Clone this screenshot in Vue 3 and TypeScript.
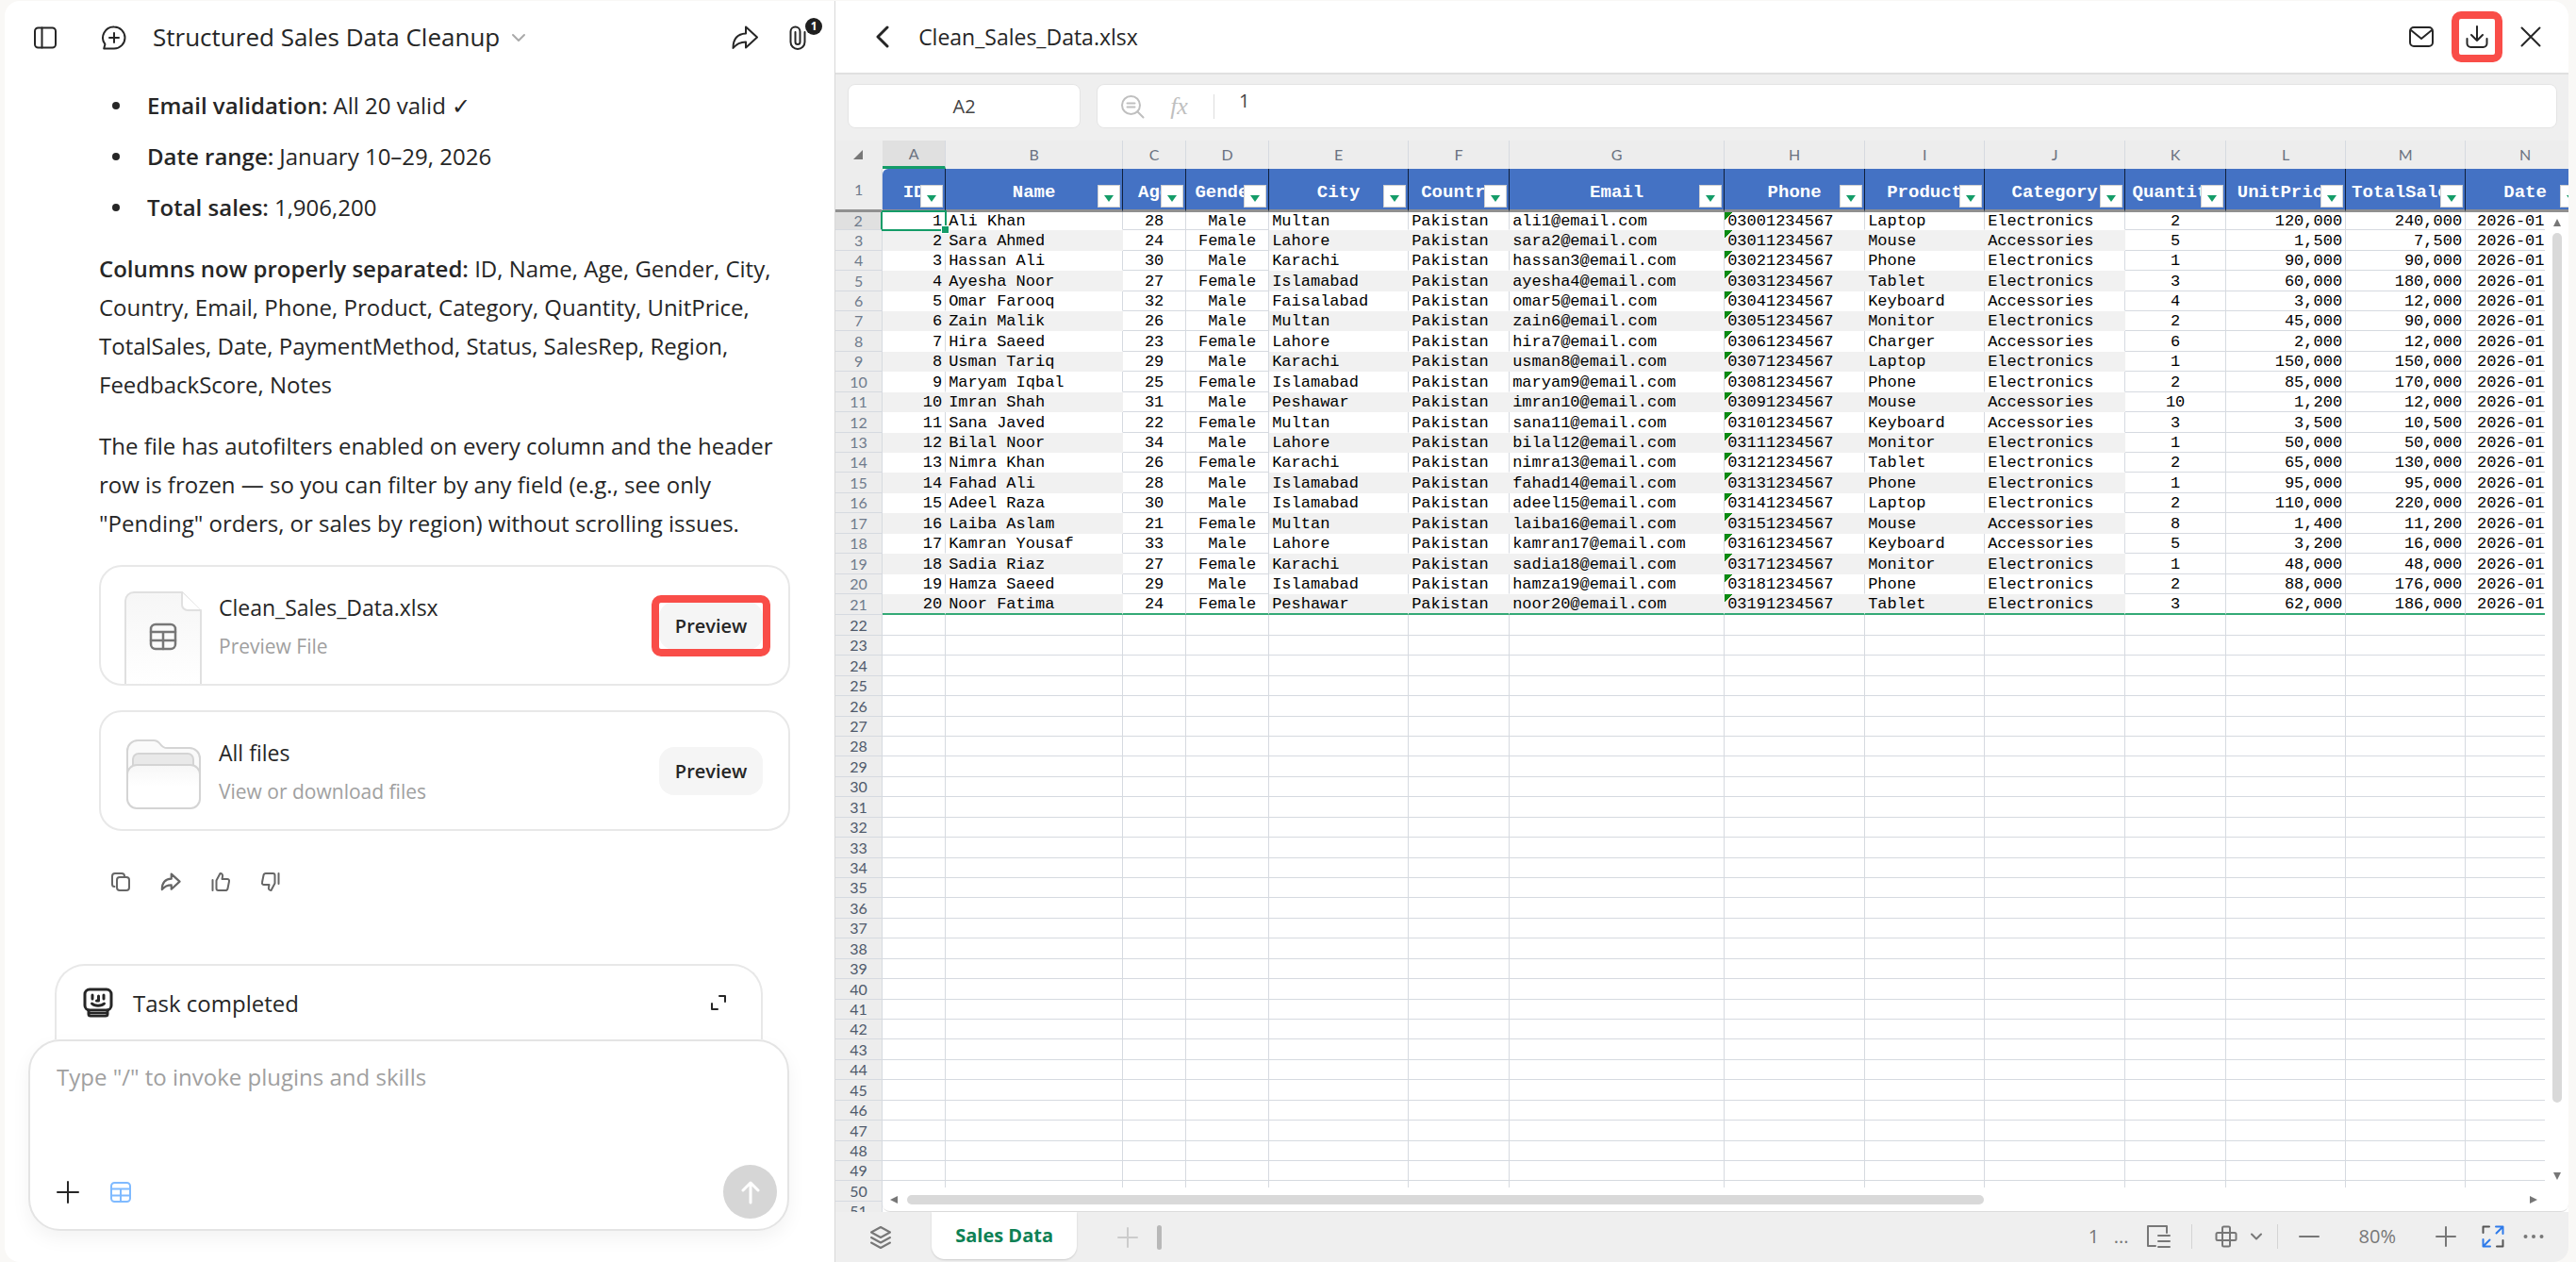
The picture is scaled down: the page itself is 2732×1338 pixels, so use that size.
<script setup lang="ts">
import { computed, ref } from 'vue'

type Align = 'left' | 'center' | 'right'

interface Column {
  letter: string
  title: string
  width: number
  align: Align
  filled: boolean
}

const columns: Column[] = [
  { letter: 'A', title: 'ID', width: 67, align: 'right', filled: true },
  { letter: 'B', title: 'Name', width: 188, align: 'left', filled: true },
  { letter: 'C', title: 'Age', width: 67, align: 'center', filled: false },
  { letter: 'D', title: 'Gender', width: 88, align: 'center', filled: false },
  { letter: 'E', title: 'City', width: 148, align: 'left', filled: true },
  { letter: 'F', title: 'Country', width: 107, align: 'left', filled: true },
  { letter: 'G', title: 'Email', width: 228, align: 'left', filled: true },
  { letter: 'H', title: 'Phone', width: 149, align: 'left', filled: true },
  { letter: 'I', title: 'Product', width: 127, align: 'left', filled: true },
  { letter: 'J', title: 'Category', width: 149, align: 'left', filled: true },
  { letter: 'K', title: 'Quantity', width: 107, align: 'center', filled: false },
  { letter: 'L', title: 'UnitPrice', width: 127, align: 'right', filled: false },
  { letter: 'M', title: 'TotalSales', width: 127, align: 'right', filled: false },
  { letter: 'N', title: 'Date', width: 127, align: 'center', filled: false },
]

const rowHeaderWidth = 50
const tableWidth = computed(() => columns.reduce((sum, c) => sum + c.width, rowHeaderWidth))

// name, age, gender, city, product, category, quantity, unit price
type Sale = [string, number, string, string, string, string, number, number]

const sales: Sale[] = [
  ['Ali Khan', 28, 'Male', 'Multan', 'Laptop', 'Electronics', 2, 120000],
  ['Sara Ahmed', 24, 'Female', 'Lahore', 'Mouse', 'Accessories', 5, 1500],
  ['Hassan Ali', 30, 'Male', 'Karachi', 'Phone', 'Electronics', 1, 90000],
  ['Ayesha Noor', 27, 'Female', 'Islamabad', 'Tablet', 'Electronics', 3, 60000],
  ['Omar Farooq', 32, 'Male', 'Faisalabad', 'Keyboard', 'Accessories', 4, 3000],
  ['Zain Malik', 26, 'Male', 'Multan', 'Monitor', 'Electronics', 2, 45000],
  ['Hira Saeed', 23, 'Female', 'Lahore', 'Charger', 'Accessories', 6, 2000],
  ['Usman Tariq', 29, 'Male', 'Karachi', 'Laptop', 'Electronics', 1, 150000],
  ['Maryam Iqbal', 25, 'Female', 'Islamabad', 'Phone', 'Electronics', 2, 85000],
  ['Imran Shah', 31, 'Male', 'Peshawar', 'Mouse', 'Accessories', 10, 1200],
  ['Sana Javed', 22, 'Female', 'Multan', 'Keyboard', 'Accessories', 3, 3500],
  ['Bilal Noor', 34, 'Male', 'Lahore', 'Monitor', 'Electronics', 1, 50000],
  ['Nimra Khan', 26, 'Female', 'Karachi', 'Tablet', 'Electronics', 2, 65000],
  ['Fahad Ali', 28, 'Male', 'Islamabad', 'Phone', 'Electronics', 1, 95000],
  ['Adeel Raza', 30, 'Male', 'Islamabad', 'Laptop', 'Electronics', 2, 110000],
  ['Laiba Aslam', 21, 'Female', 'Multan', 'Mouse', 'Accessories', 8, 1400],
  ['Kamran Yousaf', 33, 'Male', 'Lahore', 'Keyboard', 'Accessories', 5, 3200],
  ['Sadia Riaz', 27, 'Female', 'Karachi', 'Monitor', 'Electronics', 1, 48000],
  ['Hamza Saeed', 29, 'Male', 'Islamabad', 'Phone', 'Electronics', 2, 88000],
  ['Noor Fatima', 24, 'Female', 'Peshawar', 'Tablet', 'Electronics', 3, 62000],
]

const money = (n: number) => n.toLocaleString('en-US')

const sheetRows = computed(() =>
  Array.from({ length: 50 }, (_, i) => {
    const sale = sales[i]
    if (!sale) return { number: i + 2, cells: null }
    const [name, age, gender, city, product, category, quantity, price] = sale
    const id = i + 1
    return {
      number: i + 2,
      cells: [
        String(id), name, String(age), gender, city, 'Pakistan',
        `${name.split(' ')[0].toLowerCase()}${id}@email.com`,
        `03${String(i).padStart(2, '0')}1234567`,
        product, category, String(quantity), money(price), money(price * quantity),
        `2026-01-${id + 9}`,
      ],
    }
  }),
)

const files = [
  { kind: 'workbook', title: 'Clean_Sales_Data.xlsx', note: 'Preview File', marked: true },
  { kind: 'folder', title: 'All files', note: 'View or download files', marked: false },
]

const draft = ref('')
const cellName = ref('A2')
const formula = ref('1')
</script>

<template>
  <div class="app">
    <section class="chat">
      <header class="chat-head">
        <button class="icon" aria-label="Toggle sidebar">
          <svg width="26" height="26" viewBox="0 0 26 26"><rect x="2" y="2.500" width="22" height="21" rx="3.500" /><path d="M9.500 2.500v21" /></svg>
        </button>
        <button class="icon new-chat" aria-label="New chat">
          <svg width="28" height="28" viewBox="0 0 28 28"><path d="M14 2.500a11.500 11.500 0 1 1 0 23H3.200l1.200-4.600A11.500 11.500 0 0 1 14 2.500zM14 9v10M9 14h10" /></svg>
        </button>
        <h1>Structured Sales Data Cleanup</h1>
        <svg class="caret" width="16" height="16" viewBox="0 0 16 16"><path d="M2 5l6 6 6-6" /></svg>
        <div class="chat-tools">
          <button class="icon" aria-label="Share">
            <svg width="30" height="28" viewBox="0 0 30 28"><path d="M16 2.500L28 13.500 16 24.500v-6c-6 0-9.500 1.500-13.500 6.500 0-8 3.500-15 13.500-15.500z" /></svg>
          </button>
          <button class="icon attach" aria-label="Attachments">
            <svg width="22" height="28" viewBox="0 0 22 28"><path d="M18.500 8v10.500a7.500 7.500 0 0 1-15 0V7.500a5 5 0 0 1 10 0v11a2.500 2.500 0 0 1-5 0V8" /></svg>
            <span class="badge">1</span>
          </button>
        </div>
      </header>

      <div class="message">
        <ul>
          <li><strong>Email validation:</strong> All 20 valid ✓</li>
          <li><strong>Date range:</strong> January 10–29, 2026</li>
          <li><strong>Total sales:</strong> 1,906,200</li>
        </ul>
        <p>
          <strong>Columns now properly separated:</strong> ID, Name, Age, Gender, City, Country, Email, Phone,
          Product, Category, Quantity, UnitPrice, TotalSales, Date, PaymentMethod, Status, SalesRep, Region,
          FeedbackScore, Notes
        </p>
        <p>
          The file has autofilters enabled on every column and the header row is frozen — so you can filter by any
          field (e.g., see only "Pending" orders, or sales by region) without scrolling issues.
        </p>

        <div class="files">
          <article v-for="file in files" :key="file.kind" class="file">
            <svg v-if="file.kind === 'workbook'" class="thumb" width="82" height="98" viewBox="0 0 82 98">
              <defs><linearGradient id="paper" x1="0" y1="0" x2="0" y2="1"><stop offset="0" stop-color="#f6f6f6" /><stop offset="1" stop-color="#fff" /></linearGradient></defs>
              <path d="M1 99V10a9 9 0 0 1 9-9h51l20 20v78" fill="url(#paper)" stroke="#e0e0e0" stroke-width="2" />
              <path d="M61 1v13a6 6 0 0 0 6 6h14" fill="#fff" stroke="#e0e0e0" stroke-width="2" />
              <g stroke="#777" stroke-width="2.500"><rect x="28" y="35" width="26" height="26" rx="5" /><path d="M28 43h26M28 52h26M41 43v18" /></g>
            </svg>
            <svg v-else class="thumb" width="82" height="98" viewBox="0 0 82 98">
              <defs><linearGradient id="flap" x1="0" y1="0" x2="0" y2="1"><stop offset="0" stop-color="#f7f7f7" /><stop offset=".5" stop-color="#fff" /></linearGradient></defs>
              <g stroke="#d4d4d4" stroke-width="2">
                <path d="M3 40V15a11 11 0 0 1 11-11h17c8 0 6 8 14 8h24a11 11 0 0 1 11 11v17z" fill="#fafafa" />
                <path d="M9 34V24a6 6 0 0 1 6-6h52a6 6 0 0 1 6 6v10z" fill="#e9e9e9" />
                <rect x="3" y="30" width="77" height="46" rx="10" fill="url(#flap)" />
              </g>
            </svg>
            <div class="file-text">
              <h2>{{ file.title }}</h2>
              <span>{{ file.note }}</span>
            </div>
            <button class="preview">Preview<i v-if="file.marked" class="mark"></i></button>
          </article>
        </div>

        <div class="actions">
          <button class="icon" aria-label="Copy">
            <svg width="22" height="22" viewBox="0 0 22 22"><rect x="7" y="6" width="13" height="14" rx="3" /><path d="M4.500 16A2.500 2.500 0 0 1 2 13.500V5a3 3 0 0 1 3-3h7a3 3 0 0 1 3 3" /></svg>
          </button>
          <button class="icon" aria-label="Share answer">
            <svg class="bold" width="22" height="22" viewBox="0 0 30 28"><path d="M16 2.500L28 13.500 16 24.500v-6c-6 0-9.500 1.500-13.500 6.500 0-8 3.500-15 13.500-15.500z" /></svg>
          </button>
          <button class="icon" aria-label="Good answer">
            <svg width="22" height="22" viewBox="0 0 22 22"><path d="M2.500 9v11M6.500 9.500L10.500 2c2 0 3 1.500 2.500 3.500L12.500 8H18a2 2 0 0 1 2 2.500l-1.500 7.500a2.500 2.500 0 0 1-2.500 2H8.500a2 2 0 0 1-2-2z" /></svg>
          </button>
          <button class="icon" aria-label="Bad answer">
            <svg width="22" height="22" viewBox="0 0 22 22"><path d="M19.500 2v11M15.500 12.500L11.500 20c-2 0-3-1.500-2.500-3.500L9.500 14H4a2 2 0 0 1-2-2.500L3.500 4A2.500 2.500 0 0 1 6 2h7.500a2 2 0 0 1 2 2z" /></svg>
          </button>
        </div>
      </div>

      <div class="dock">
        <div class="task">
          <svg class="bold" width="34" height="34" viewBox="0 0 34 34">
            <rect x="3" y="3" width="28" height="22" rx="5" /><path d="M7 25v4a2 2 0 0 0 2 2h16a2 2 0 0 0 2-2v-4" />
            <path d="M8 28h18" stroke-width="2" /><path d="M11 9v4M23 9v4M17.500 10v5h-2M10.500 18c3 3 10 3 13 0" />
          </svg>
          <span>Task completed</span>
          <button class="icon" aria-label="Expand task">
            <svg width="18" height="18" viewBox="0 0 18 18"><path d="M10 2h6v6M8 16H2v-6" /></svg>
          </button>
        </div>
        <form class="composer" @submit.prevent>
          <textarea v-model="draft" rows="2" aria-label="Message" placeholder="Type &quot;/&quot; to invoke plugins and skills"></textarea>
          <div class="composer-tools">
            <button type="button" class="icon" aria-label="Add">
              <svg width="24" height="24" viewBox="0 0 24 24"><path d="M12 1v22M1 12h22" /></svg>
            </button>
            <button type="button" class="icon sheets" aria-label="Sheets">
              <svg width="24" height="24" viewBox="0 0 24 24"><rect x="2" y="2" width="20" height="20" rx="3.500" /><path d="M2 8.500h20M2 15.500h20M12 8.500V22" /></svg>
            </button>
            <button class="send" aria-label="Send">
              <svg class="bold" width="26" height="26" viewBox="0 0 26 26"><path d="M13 24V3M5 11l8-8 8 8" /></svg>
            </button>
          </div>
        </form>
      </div>
    </section>

    <section class="sheet">
      <header class="sheet-head">
        <button class="icon back" aria-label="Back">
          <svg class="bold" width="16" height="24" viewBox="0 0 16 24"><path d="M13 2L3 12l10 10" /></svg>
        </button>
        <h1>Clean_Sales_Data.xlsx</h1>
        <div class="sheet-tools">
          <button class="icon" aria-label="Mail">
            <svg width="28" height="24" viewBox="0 0 28 24"><rect x="2" y="2" width="24" height="20" rx="4" /><path d="M3 5l11 9 11-9" /></svg>
          </button>
          <button class="icon download" aria-label="Download">
            <svg width="26" height="26" viewBox="0 0 26 26"><path d="M13 2v15M7 11l6 6 6-6M2.500 15v5a4 4 0 0 0 4 4h13a4 4 0 0 0 4-4v-5" /></svg>
          </button>
          <button class="icon" aria-label="Close">
            <svg width="24" height="24" viewBox="0 0 24 24"><path d="M2.500 2.500l19 19M21.500 2.500l-19 19" /></svg>
          </button>
        </div>
      </header>

      <div class="formula-bar">
        <input v-model="cellName" class="cell-name" aria-label="Cell" />
        <div class="formula">
          <svg width="26" height="26" viewBox="0 0 26 26"><circle cx="11.500" cy="11.500" r="9.500" /><path d="M18.500 18.500l6 6M7.500 9.500h8M7.500 13.500h8" /></svg>
          <em>fx</em>
          <input v-model="formula" aria-label="Formula" />
        </div>
      </div>

      <div class="viewport">
        <table :style="{ width: tableWidth + 'px' }">
          <colgroup>
            <col :style="{ width: rowHeaderWidth + 'px' }" />
            <col v-for="c in columns" :key="c.letter" :style="{ width: c.width + 'px' }" />
          </colgroup>
          <thead>
            <tr class="letters">
              <th class="corner"><svg width="10" height="10" viewBox="0 0 10 10"><path d="M10 0v10H0z" /></svg></th>
              <th v-for="c in columns" :key="c.letter" scope="col" :class="{ current: c.letter === 'A' }">{{ c.letter }}</th>
            </tr>
            <tr class="titles">
              <th class="row-number">1</th>
              <th v-for="c in columns" :key="c.letter" class="title">
                <span>{{ c.title }}</span>
                <button class="filter" :aria-label="'Filter ' + c.title"></button>
              </th>
            </tr>
          </thead>
          <tbody>
            <tr v-for="row in sheetRows" :key="row.number" :class="{ data: row.cells, striped: row.cells && row.number % 2 }">
              <th class="row-number" scope="row">{{ row.number }}</th>
              <td v-for="(c, i) in columns" :key="c.letter" :class="[c.align, { filled: c.filled, flagged: row.cells && c.letter === 'H', selected: row.number === 2 && i === 0 }]">{{ row.cells ? row.cells[i] : '' }}</td>
            </tr>
          </tbody>
        </table>
        <div class="bar vertical"><i class="arrow up"></i><i class="grip"></i><i class="rest"></i><i class="arrow down"></i></div>
        <div class="bar horizontal"><i class="arrow prev"></i><i class="grip"></i><i class="rest"></i><i class="arrow next"></i></div>
      </div>

      <footer class="status">
        <button class="icon layers" aria-label="All sheets">
          <svg width="24" height="26" viewBox="0 0 24 26"><path d="M12 2l10 5.500L12 13 2 7.500zM2 13l10 5.500L22 13M2 18.500L12 24l10-5.500" /></svg>
        </button>
        <button class="tab">Sales Data</button>
        <button class="icon add-sheet" aria-label="Add sheet">
          <svg width="22" height="22" viewBox="0 0 22 22"><path d="M11 1v20M1 11h20" /></svg>
        </button>
        <i class="splitter"></i>
        <div class="status-tools">
          <span class="count">1 &nbsp;&nbsp;...</span>
          <button class="icon" aria-label="Outline">
            <svg width="26" height="26" viewBox="0 0 26 26"><path d="M22 9V2H2v21h8M13 12h12M13 18h12M13 24h12" /></svg>
          </button>
          <i class="rule"></i>
          <button class="icon cross" aria-label="Crosshair">
            <svg width="24" height="24" viewBox="0 0 24 24"><rect x="8" y="1.500" width="8" height="21" rx="1.500" /><rect x="1.500" y="8" width="21" height="8" rx="1.500" /></svg>
            <svg width="12" height="12" viewBox="0 0 12 12"><path d="M1 3.500l5 5 5-5" /></svg>
          </button>
          <i class="rule"></i>
          <button class="icon" aria-label="Zoom out">
            <svg width="22" height="22" viewBox="0 0 22 22"><path d="M1 11h20" /></svg>
          </button>
          <span class="zoom">80%</span>
          <button class="icon" aria-label="Zoom in">
            <svg width="22" height="22" viewBox="0 0 22 22"><path d="M11 1v20M1 11h20" /></svg>
          </button>
          <button class="icon full" aria-label="Full screen">
            <svg width="24" height="24" viewBox="0 0 24 24"><path d="M1.500 8V1.500H8M22.500 16v6.500H16" stroke="#555" /><path d="M15 1.500h7.500V9M22 2l-6.500 6.500M9 22.500H1.500V15M2 22l6.500-6.500" stroke="#2f7bea" /></svg>
          </button>
          <button class="icon more" aria-label="More">
            <svg width="22" height="22" viewBox="0 0 22 22"><circle cx="2.500" cy="11" r="2" /><circle cx="11" cy="11" r="2" /><circle cx="19.500" cy="11" r="2" /></svg>
          </button>
        </div>
      </footer>
    </section>
  </div>
</template>

<style>
body {
  margin: 0;
  background: #f9f8f6;
}
</style>

<style scoped>
.app {
  display: flex;
  box-sizing: border-box;
  height: 100vh;
  padding: 1px 8px 0 5px;
  color: #262626;
  font: 24px/41px "Open Sans", "Noto Sans", sans-serif;
}
h1, h2, p, ul {
  margin: 0;
  padding: 0;
  font-weight: 400;
}
button, input, textarea {
  box-sizing: border-box;
  margin: 0;
  padding: 0;
  border: 0;
  background: none;
  color: inherit;
  font: inherit;
  outline: 0;
}
svg {
  display: block;
  flex: none;
  fill: none;
  stroke: currentColor;
  stroke-width: 2;
  stroke-linecap: round;
  stroke-linejoin: round;
}
.bold { stroke-width: 3; }
.icon {
  display: flex;
  flex: none;
  align-items: center;
}

.chat {
  display: flex;
  flex: none;
  flex-direction: column;
  width: 32.37%;
  background: #fff;
  border-radius: 16px 0 0 16px;
}
.chat-head {
  display: flex;
  flex: none;
  align-items: center;
  height: 77px;
  padding: 0 28px 0 30px;
}
.new-chat { margin-left: 46px; }
h1 { white-space: nowrap; }
.chat-head h1 {
  margin-left: 27px;
  font-size: 26px;
}
.caret {
  margin-left: 12px;
  color: #aaa;
}
.chat-tools {
  display: flex;
  gap: 30px;
  margin-left: auto;
}
.attach { position: relative; }
.badge {
  position: absolute;
  top: -7px;
  right: -15px;
  width: 18px;
  height: 18px;
  border-radius: 9px;
  background: #1f1f1f;
  color: #fff;
  font: 700 12px/18px "Open Sans", sans-serif;
  text-align: center;
}
.message {
  display: flex;
  flex-direction: column;
  gap: 24px;
  padding: 13px 47px 0 100px;
}
ul {
  display: flex;
  flex-direction: column;
  gap: 13px;
  list-style: none;
}
li {
  display: flex;
  align-items: center;
  gap: 6px;
  padding-left: 14px;
}
li::before {
  content: "";
  width: 8px;
  height: 8px;
  margin-right: 23px;
  border-radius: 50%;
  background: #262626;
}
strong { font-weight: 600; }
.files {
  display: flex;
  flex-direction: column;
  gap: 26px;
}
.file {
  display: flex;
  align-items: center;
  box-sizing: border-box;
  height: 128px;
  padding: 0 27px 0 25px;
  border: 2px solid #e8e8e8;
  border-radius: 24px;
}
.thumb {
  align-self: flex-end;
}
.file-text {
  display: flex;
  flex-direction: column;
  margin: 4px auto 0 18px;
}
.file-text h2, .sheet-head h1 { font-size: 23px; }
.file-text span {
  color: #a0a0a0;
  font-size: 21px;
}
.preview {
  position: relative;
  width: 110px;
  height: 51px;
  border-radius: 16px;
  background: #f5f5f5;
  font-size: 20px;
  font-weight: 600;
}
.mark {
  position: absolute;
  inset: -7px -8px;
  border: 8px solid #f94d48;
  border-radius: 10px;
}
.actions {
  display: flex;
  gap: 31px;
  margin-top: 19px;
  padding-left: 12px;
  color: #666;
}
.dock {
  margin: auto 48px 33px 25px;
}
.task {
  display: flex;
  align-items: center;
  gap: 20px;
  box-sizing: border-box;
  height: 80px;
  margin: 0 28px;
  padding: 0 36px 0 27px;
  border: 2px solid #e8e8e8;
  border-bottom: 0;
  border-radius: 32px 32px 0 0;
}
.task .icon { margin-left: auto; }
.composer {
  box-sizing: border-box;
  height: 203px;
  padding: 17px 11px 11px 28px;
  display: flex;
  flex-direction: column;
  justify-content: space-between;
  border: 2px solid #e4e4e4;
  border-radius: 34px;
  background: #fff;
  box-shadow: 0 8px 20px rgba(0, 0, 0, 0.05);
}
textarea {
  width: 100%;
  resize: none;
}
textarea::placeholder { color: #a0a0a0; opacity: 1; }
.composer-tools {
  display: flex;
  align-items: center;
}
.sheets {
  margin-left: 32px;
  color: #7fbaff;
}
.send {
  display: flex;
  align-items: center;
  justify-content: center;
  width: 57px;
  height: 57px;
  margin-left: auto;
  border-radius: 50%;
  background: #d6d6d6;
  color: #fff;
}

.sheet {
  display: flex;
  flex: 1;
  flex-direction: column;
  min-width: 0;
  overflow: hidden;
  border-left: 1px solid #d8d8d8;
  border-radius: 0 16px 16px 0;
  background: #efefef;
}
.sheet-head {
  display: flex;
  align-items: center;
  box-sizing: border-box;
  height: 78px;
  padding: 0 28px 0 42px;
  border-bottom: 2px solid #e0e0e0;
  background: #fff;
}
.sheet-head h1 { margin-left: 30px; }
.sheet-tools {
  display: flex;
  align-items: center;
  gap: 18px;
  margin-left: auto;
}
.download {
  box-sizing: border-box;
  justify-content: center;
  width: 54px;
  height: 54px;
  border: 8px solid #f94d48;
  border-radius: 10px;
}
.formula-bar {
  display: flex;
  gap: 17px;
  padding: 10px 12px 13px 13px;
  font-size: 20px;
  line-height: 24px;
}
.cell-name, .formula {
  box-sizing: border-box;
  height: 47px;
  border: 1px solid #e4e4e4;
  border-radius: 8px;
  background: #fff;
}
.cell-name {
  flex: none;
  width: 247px;
  color: #444;
  text-align: center;
}
.formula {
  display: flex;
  flex: 1;
  align-items: center;
  padding-left: 24px;
  color: #bfbfbf;
}
.formula em {
  margin-left: 27px;
  padding-right: 27px;
  border-right: 1px solid #ddd;
  font: italic 26px/26px "Liberation Serif", serif;
}
.formula input {
  flex: 1;
  align-self: flex-start;
  height: 32px;
  padding-left: 26px;
  color: #444;
}

.viewport {
  position: relative;
  flex: 1;
  min-height: 0;
  overflow: hidden;
}
table {
  table-layout: fixed;
  border-spacing: 0;
  background: #fff;
  color: #000;
  font: 17px/18px "Liberation Mono", monospace;
}
th, td {
  box-sizing: border-box;
  height: 21px;
  padding: 0 3px;
  border: 0 solid #d6dae0;
  border-width: 0 1px 1px 0;
  overflow: hidden;
  white-space: nowrap;
}
td { padding-top: 2px; }
tbody tr:nth-child(7n + 2) > *,
tbody tr:nth-child(7n + 4) > *,
tbody tr:nth-child(7n) > * { height: 22px; }
tbody tr:first-child > * {
  height: 19px;
  line-height: 16px;
}
.letters th {
  height: 30px;
  border-width: 0 1px 0 0;
  background: #ededed;
  color: #6a7280;
  font: 16px/20px Lato, sans-serif;
}
.letters .corner {
  border-right-color: #ededed;
}
.corner svg {
  margin-left: 16px;
  fill: #777;
  stroke: none;
}
.letters .current {
  border-bottom: 3px solid #149c68;
  background: #e0e0e0;
}
.row-number {
  padding: 0;
  background: #ededed;
  color: #4f5a6b;
  font: 16px/18px Lato, sans-serif;
}
.data .row-number, .titles .row-number { color: #6f7b8c; }
tbody tr:first-child .row-number {
  border-right: 2px solid #149c68;
  background: #e0e0e0;
}
.titles th {
  height: 46px;
  border-bottom: 3px solid #909090;
}
.title {
  position: relative;
  padding: 6px 0 0;
  border-right-color: #10203c;
  background: #4472c4;
  color: #fff;
  font: 700 19px/22px "Liberation Mono", monospace;
}
.title:nth-child(2) { border-top-left-radius: 6px; }
.title span {
  display: flex;
  justify-content: center;
}
.filter {
  position: absolute;
  right: 2px;
  bottom: 2px;
  width: 24px;
  height: 24px;
  border: 1px solid #d0d0d0;
  background: #fff;
}
.filter::after {
  content: "";
  display: block;
  margin: 5px auto 0;
  width: 0;
  border: 5px solid transparent;
  border-top: 7px solid #149c68;
  border-bottom: 0;
}
.left { text-align: left; }
.center { text-align: center; }
.right { text-align: right; }
.data .filled { border-bottom-color: transparent; }
.striped .filled {
  border-color: transparent;
  background-color: #f1f1f1;
}
.data:nth-child(20) td { border-bottom: 2px solid #34aa76; }
.flagged {
  background-image: linear-gradient(135deg, #0b8a12 6px, transparent 6px);
  background-repeat: no-repeat;
}
.selected {
  position: relative;
  overflow: visible;
}
.selected::before {
  content: "";
  position: absolute;
  inset: -2px -2px -2px -1px;
  border: 2px solid #149c68;
  border-left: 0;
}
.selected::after {
  content: "";
  position: absolute;
  right: -5px;
  bottom: -5px;
  width: 7px;
  height: 7px;
  border: 1px solid #fff;
  background: #149c68;
}

.bar {
  position: absolute;
  display: flex;
  align-items: center;
  box-sizing: border-box;
  background: #fff;
}
.vertical {
  top: 76px;
  right: 0;
  bottom: 0;
  flex-direction: column;
  width: 25px;
  padding: 7px 0 34px;
}
.horizontal {
  right: 0;
  bottom: 0;
  left: 50px;
  height: 26px;
  padding: 0 33px 0 8px;
  border-bottom: 1px solid #dcdcdc;
  border-radius: 0 0 8px 8px;
}
.grip {
  border-radius: 5px;
  background: #d9d9d9;
}
.vertical .grip {
  flex: 918;
  width: 10px;
  margin-top: 7px;
}
.vertical .rest { flex: 74; }
.horizontal .grip {
  flex: 1140;
  height: 10px;
  margin-left: 10px;
}
.horizontal .rest { flex: 578; }
.arrow {
  width: 0;
  height: 0;
  border: 4px solid transparent;
}
.up { border-top: 0; border-bottom: 8px solid #777; }
.down { border-bottom: 0; border-top: 8px solid #777; }
.prev { border-left: 0; border-right: 8px solid #777; }
.next { border-right: 0; border-left: 8px solid #777; }

.status {
  display: flex;
  flex: none;
  height: 53px;
  padding: 0 26px 0 36px;
  color: #777;
  font-size: 20px;
  line-height: 50px;
}
.tab {
  position: relative;
  width: 154px;
  height: 50px;
  margin-left: 42px;
  border-radius: 0 0 14px 14px;
  background: #fff;
  box-shadow: 0 1px 2px rgba(0, 0, 0, 0.15);
  color: #0e8155;
  font-weight: 700;
}
.add-sheet {
  margin-left: 43px;
  color: #ccc;
}
.splitter {
  align-self: center;
  width: 5px;
  height: 26px;
  margin-left: 20px;
  border-radius: 3px;
  background: #b8b8b8;
}
.status-tools {
  display: flex;
  align-items: center;
  height: 51px;
  margin-left: auto;
}
.count { margin-right: 18px; }
.rule {
  width: 1px;
  height: 26px;
  margin: 0 22px;
  background: #d4d4d4;
}
.cross { gap: 14px; }
.rule + .icon { margin-left: 2px; }
.cross + .rule { margin: 0 20px 0 16px; }
.zoom { margin: 0 42px; }
.full { margin: 0 20px 0 27px; }
.more svg {
  fill: #777;
  stroke: none;
}
</style>
